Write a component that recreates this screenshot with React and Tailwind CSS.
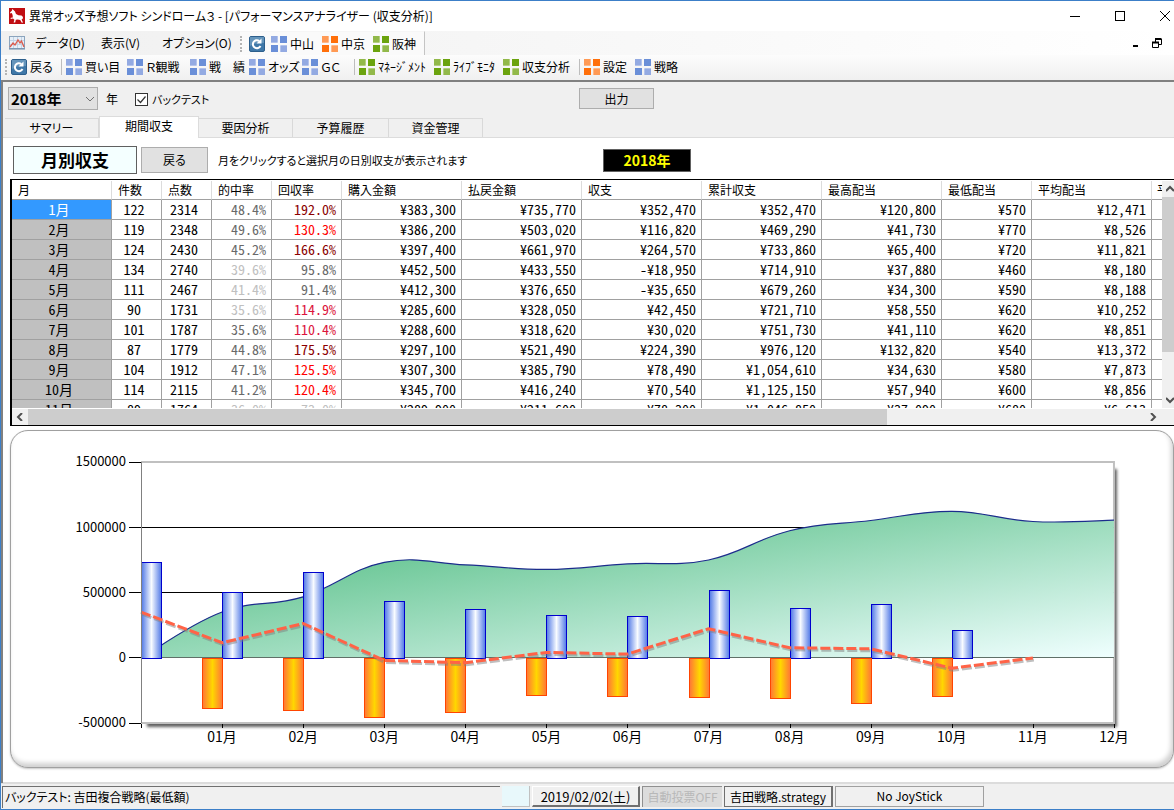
import { useState } from 'react';

const MONTHS = [
  ['1月', '122', '2314', '48.4%', '192.0%', '¥383,300', '¥735,770', '¥352,470', '¥352,470', '¥120,800', '¥570', '¥12,471'],
  ['2月', '119', '2348', '49.6%', '130.3%', '¥386,200', '¥503,020', '¥116,820', '¥469,290', '¥41,730', '¥770', '¥8,526'],
  ['3月', '124', '2430', '45.2%', '166.6%', '¥397,400', '¥661,970', '¥264,570', '¥733,860', '¥65,400', '¥720', '¥11,821'],
  ['4月', '134', '2740', '39.6%', '95.8%', '¥452,500', '¥433,550', '-¥18,950', '¥714,910', '¥37,880', '¥460', '¥8,180'],
  ['5月', '111', '2467', '41.4%', '91.4%', '¥412,300', '¥376,650', '-¥35,650', '¥679,260', '¥34,300', '¥590', '¥8,188'],
  ['6月', '90', '1731', '35.6%', '114.9%', '¥285,600', '¥328,050', '¥42,450', '¥721,710', '¥58,550', '¥620', '¥10,252'],
  ['7月', '101', '1787', '35.6%', '110.4%', '¥288,600', '¥318,620', '¥30,020', '¥751,730', '¥41,110', '¥620', '¥8,851'],
  ['8月', '87', '1779', '44.8%', '175.5%', '¥297,100', '¥521,490', '¥224,390', '¥976,120', '¥132,820', '¥540', '¥13,372'],
  ['9月', '104', '1912', '47.1%', '125.5%', '¥307,300', '¥385,790', '¥78,490', '¥1,054,610', '¥34,630', '¥580', '¥7,873'],
  ['10月', '114', '2115', '41.2%', '120.4%', '¥345,700', '¥416,240', '¥70,540', '¥1,125,150', '¥57,940', '¥600', '¥8,856'],
  ['11月', '89', '1764', '36.0%', '73.0%', '¥289,900', '¥211,600', '-¥78,300', '¥1,046,850', '¥37,090', '¥680', '¥6,613'],
];

// text colours of the hit rate and return rate columns
const HIT_COLORS = [
  'text-[#696969]', 'text-[#696969]', 'text-[#696969]', 'text-[#c0c0c0]', 'text-[#c0c0c0]', 'text-[#c0c0c0]',
  'text-[#696969]', 'text-[#696969]', 'text-[#696969]', 'text-[#696969]', 'text-[#c0c0c0]',
];
const RETURN_COLORS = [
  'text-[#8b0000]', 'text-[#ff0000]', 'text-[#8b0000]', 'text-[#696969]', 'text-[#696969]', 'text-[#dc143c]',
  'text-[#dc143c]', 'text-[#8b0000]', 'text-[#ff0000]', 'text-[#ff0000]', 'text-[#c0c0c0]',
];

const COLUMNS = [
  { label: '月', width: 'w-[100px]' },
  { label: '件数', width: 'w-[50px]' },
  { label: '点数', width: 'w-[50px]' },
  { label: '的中率', width: 'w-[60px]' },
  { label: '回収率', width: 'w-[70px]' },
  { label: '購入金額', width: 'w-[120px]' },
  { label: '払戻金額', width: 'w-[120px]' },
  { label: '収支', width: 'w-[120px]' },
  { label: '累計収支', width: 'w-[120px]' },
  { label: '最高配当', width: 'w-[120px]' },
  { label: '最低配当', width: 'w-[90px]' },
  { label: '平均配当', width: 'w-[120px]' },
];

const TABS = [
  { label: 'サマリー', width: 'w-[94px]' },
  { label: '期間収支', width: 'w-[100px]' },
  { label: '要因分析', width: 'w-[94px]' },
  { label: '予算履歴', width: 'w-[96px]' },
  { label: '資金管理', width: 'w-[94px]' },
];

function TileIcon({ color }) {
  const tones = {
    blue: ['#93aae2', '#6a8fd8'],
    orange: ['#ff9a55', '#ff6f0a'],
    green: ['#92b94a', '#6ba30e'],
  };
  const [light, dark] = tones[color];
  return (
    <svg className="size-4 shrink-0" viewBox="0 0 16 16" aria-hidden="true">
      <rect x="0" y="0" width="7" height="7" fill={light} />
      <rect x="9" y="0" width="7" height="7" fill={dark} />
      <rect x="0" y="9" width="7" height="7" fill={dark} />
      <rect x="9" y="9" width="7" height="7" fill={light} />
      <path d="M6.500 0v7M9.500 9v7M0 6.500h7M9 9.500h7" stroke="#ffffff" strokeOpacity="0.3" />
    </svg>
  );
}

function RefreshIcon() {
  return (
    <svg className="size-4 shrink-0" viewBox="0 0 16 16" aria-hidden="true">
      <rect x="0.5" y="0.5" width="15" height="15" rx="1.5" fill="#3f78a8" stroke="#2d5f8c" />
      <path d="M1 1h14v6Q8 6 1 10z" fill="#7fa8c8" fillOpacity="0.6" />
      <path d="M11.5 10a4 4 0 1 1-1.2-5" fill="none" stroke="#fff" strokeWidth="2" />
      <path d="M12.5 2.5v5h-5z" fill="#fff" />
    </svg>
  );
}

function HorseIcon() {
  return (
    <svg className="size-4 shrink-0" viewBox="0 0 16 16" aria-hidden="true">
      <rect width="16" height="16" fill="#c00d12" />
      <path
        d="M3 1l1.5 1L6 3.5 7 6l2.5 1.2 3 .2 1.3 1.4.4 3-.9-1.6-.6 1.6 1.3 2.8-1.2.2-1.6-2.8-2.4-.6-2 .4-.6 2.6-1.6.2.8-2.8-1.4-1.2L1.6 11l.2-1.2 2-.4L3.6 7 2.8 5 1.4 5.6 1 4.6 3 2.6z"
        fill="#fff"
      />
    </svg>
  );
}

function GraphIcon() {
  return (
    <svg className="h-3.5 w-4 shrink-0" viewBox="0 0 16 14" aria-hidden="true">
      <rect x="0.5" y="0.5" width="15" height="12" fill="#e6eff8" stroke="#8ba4bd" />
      <path d="M4.5 1v11M8.5 1v11M12.5 1v11M1 4.5h14M1 8.5h14" stroke="#c3d3e4" />
      <path d="M1 11l3-4 2 2 3-5 2 3 1.5-2L15 11" fill="none" stroke="#dc5a4b" strokeWidth="1.3" />
      <path d="M0 13h16" stroke="#6d8aa6" />
    </svg>
  );
}

function ToolButton({ icon, label, width, color }) {
  return (
    <button type="button" className={`flex h-5 shrink-0 items-center gap-[3px] whitespace-nowrap ${width}`}>
      {icon === 'refresh' ? <RefreshIcon /> : <TileIcon color={color} />}
      <span>{label}</span>
    </button>
  );
}

function Grip() {
  return <span className="h-4 w-0 border-l-2 border-dotted border-[#b4b4b4]" />;
}

function Separator() {
  return <span className="mr-1 h-4 w-px shrink-0 bg-[#bdbdbd]" />;
}

function Chevron({ d }) {
  return (
    <svg className="size-2 shrink-0" viewBox="0 0 8 8" aria-hidden="true">
      <path d={d} fill="none" stroke="#505050" strokeWidth="2" />
    </svg>
  );
}

function TitleBar() {
  return (
    <header className="flex h-[30px] items-center bg-white pl-2">
      <HorseIcon />
      <h1 className="ml-1 text-xs whitespace-pre">異常オッズ予想ソフト シンドローム３ - [パフォーマンスアナライザー (収支分析)]</h1>
      <div className="-mr-[14px] ml-auto flex">
        <button type="button" aria-label="最小化" className="flex w-[45px] justify-center">
          <svg className="size-3" viewBox="0 0 12 12"><path d="M1 6.5h10" stroke="#000" /></svg>
        </button>
        <button type="button" aria-label="最大化" className="flex w-[45px] justify-center">
          <svg className="size-3" viewBox="0 0 12 12"><rect x="1.5" y="1.5" width="9" height="9" fill="none" stroke="#000" /></svg>
        </button>
        <button type="button" aria-label="閉じる" className="flex w-[46px] justify-center">
          <svg className="size-3" viewBox="0 0 12 12"><path d="M1 1l10 10M11 1L1 11" stroke="#000" /></svg>
        </button>
      </div>
    </header>
  );
}

function MenuBar() {
  return (
    <div className="flex h-6 items-center bg-linear-to-r from-[#f0f0f0] to-white pl-2 text-xs">
      <GraphIcon />
      <nav className="ml-[10px] flex w-[205px] whitespace-nowrap">
        <button type="button" className="w-[66px] text-left">データ(D)</button>
        <button type="button" className="w-[61px] text-left">表示(V)</button>
        <button type="button" className="text-left">オプション(O)</button>
      </nav>
      <div className="flex h-6 items-center border-t border-r border-t-[#f6f6f6] border-r-[#c4c4c4] bg-[#fafafa]">
        <Grip />
        <div className="ml-[7px] flex">
          <ToolButton icon="refresh" label="" width="w-[22px]" />
          <ToolButton color="blue" label="中山" width="w-[51px]" />
          <ToolButton color="orange" label="中京" width="w-[51px]" />
          <ToolButton color="green" label="阪神" width="w-[51px]" />
        </div>
      </div>
      <div className="ml-auto flex items-center gap-3 pr-3">
        <button type="button" aria-label="子ウィンドウを最小化">
          <svg className="h-3 w-2" viewBox="0 0 8 12"><path d="M1 9h5" stroke="#000" strokeWidth="2" /></svg>
        </button>
        <button type="button" aria-label="子ウィンドウを元に戻す">
          <svg className="size-[10px]" viewBox="0 0 10 10">
            <path d="M3 1h6.5M0 4.5h7" stroke="#000" strokeWidth="2" />
            <path d="M3.5 1v3M9.500 1v5.500H7M.5 4v5.500h6V4" fill="none" stroke="#000" />
          </svg>
        </button>
      </div>
    </div>
  );
}

function ToolBar() {
  return (
    <div className="flex h-[25px] items-start bg-linear-to-b from-[#fcfcfc] to-[#f0f0f0] pt-[2px] pl-1 text-xs">
      <div className="flex h-5 items-center">
        <Grip />
        <div className="ml-1 flex items-center">
          <ToolButton icon="refresh" label="戻る" width="w-[50px]" />
          <Separator />
          <ToolButton color="blue" label="買い目" width="w-[61px]" />
          <ToolButton color="blue" label="Ｒ観戦" width="w-[63px]" />
          <ToolButton color="blue" label="戦　績" width="w-[59px]" />
          <ToolButton color="blue" label="オッズ" width="w-[53px]" />
          <ToolButton color="blue" label="ＧＣ" width="w-[52px]" />
          <Separator />
          <ToolButton color="green" label="ﾏﾈｰｼﾞﾒﾝﾄ" width="w-[75px]" />
          <ToolButton color="green" label="ﾗｲﾌﾞﾓﾆﾀ" width="w-[69px]" />
          <ToolButton color="green" label="収支分析" width="w-[76px]" />
          <Separator />
          <ToolButton color="orange" label="設定" width="w-[51px]" />
          <ToolButton color="blue" label="戦略" width="w-[51px]" />
        </div>
      </div>
    </div>
  );
}

function FilterRow() {
  const [backtest, setBacktest] = useState(true);

  return (
    <div className="flex h-[34px] items-start pt-[5px] pl-[5px] text-xs">
      <div className="relative h-[23px] w-[90px]">
        <select
          id="year"
          defaultValue="2018年"
          className="size-full appearance-none border border-[#adadad] bg-[#e1e1e1] pl-[2px] text-[15px] leading-none font-bold"
        >
          <option>2018年</option>
          <option>2017年</option>
        </select>
        <svg className="pointer-events-none absolute top-2 right-1 size-2" viewBox="0 0 8 8">
          <path d="M0 2l4 4 4-4" fill="none" stroke="#707070" />
        </svg>
      </div>
      <label htmlFor="year" className="ml-2 w-[29px] leading-[24px]">年</label>
      <span className="relative mt-[6px] size-[13px]">
        <input
          id="backtest"
          type="checkbox"
          checked={backtest}
          onChange={e => setBacktest(e.target.checked)}
          className="block size-[13px] appearance-none border border-[#333] bg-white"
        />
        {backtest && (
          <svg className="pointer-events-none absolute inset-0 size-[13px]" viewBox="0 0 13 13">
            <path d="M2.500 6.500l3 3 5-6" fill="none" stroke="#333" strokeWidth="1.2" />
          </svg>
        )}
      </span>
      <label htmlFor="backtest" className="ml-1 w-[427px] text-[11px] leading-[24px]">バックテスト</label>
      <button type="button" className="mt-px h-[21px] w-[75px] border border-[#adadad] bg-[#e1e1e1] leading-none">出力</button>
    </div>
  );
}

function Tabs() {
  const [active, setActive] = useState(1);

  return (
    <div role="tablist" className="flex h-[22px] items-end border-b border-[#dcdcdc] pl-[2px] text-xs">
      {TABS.map((tab, i) => (
        <button
          key={tab.label}
          type="button"
          role="tab"
          aria-selected={i === active}
          onClick={() => setActive(i)}
          className={`${tab.width} ${
            i === active
              ? '-mb-px h-[22px] border border-b-0 border-[#dcdcdc] bg-white pb-[3px]'
              : 'h-[19px] border border-b-0 border-l-0 border-[#d9d9d9] bg-[#f0f0f0]'
          }`}
        >
          {tab.label}
        </button>
      ))}
    </div>
  );
}

function cellClass(row, col) {
  if (col === 0) {
    return row === 0 ? 'bg-[#3399ff] text-white text-center' : 'bg-[#c0c0c0] text-center';
  }
  if (col < 3) {
    return 'text-center';
  }
  if (col === 3) {
    return `text-right ${HIT_COLORS[row]}`;
  }
  if (col === 4) {
    return `text-right ${RETURN_COLORS[row]}`;
  }
  return 'text-right';
}

function MonthTable() {
  return (
    <div className="mt-[5px] ml-[7px] border-y border-l-2 border-black">
      <div className="flex h-[229px] border-b border-white pt-px">
        <div className="min-w-0 flex-1 overflow-hidden">
          <table className="w-full table-fixed border-separate border-spacing-0 text-sm leading-[19px]">
            <thead>
              <tr className="text-xs leading-[18px]">
                {COLUMNS.map(col => (
                  <th
                    key={col.label}
                    scope="col"
                    className={`h-[19px] border-r border-b border-r-[#dcdcdc] border-b-[#a0a0a0] p-0 pl-[6px] text-left font-normal whitespace-nowrap ${col.width}`}
                  >
                    {col.label}
                  </th>
                ))}
                <th scope="col" className="overflow-hidden border-b border-b-[#a0a0a0] p-0 pl-[5px] text-left font-normal whitespace-nowrap">平均</th>
              </tr>
            </thead>
            <tbody className="[font-feature-settings:'hwid']">
              {MONTHS.map((row, r) => (
                <tr key={row[0]}>
                  {row.map((value, c) => (
                    <td key={c} className={`h-5 border-r border-b border-[#a0a0a0] p-0 pr-[5px] ${cellClass(r, c)}`}>
                      {value}
                    </td>
                  ))}
                  <td className="border-b border-[#a0a0a0] p-0" />
                </tr>
              ))}
            </tbody>
          </table>
        </div>
        <div className="flex w-3 flex-col items-end bg-[#f0f0f0]">
          <div className="flex h-4 items-center">
            <Chevron d="M0 6l4-4 4 4" />
          </div>
          <div className="h-[155px] w-full bg-[#cdcdcd]" />
          <div className="mt-auto flex h-[17px] items-center">
            <Chevron d="M0 2l4 4 4-4" />
          </div>
        </div>
      </div>
      <div className="flex h-4 items-center bg-[#f0f0f0] pr-[17px]">
        <div className="flex w-4 justify-center">
          <Chevron d="M6 0L2 4l4 4" />
        </div>
        <div className="h-full w-3/4 bg-[#cdcdcd]" />
        <div className="ml-auto">
          <Chevron d="M2 0l4 4-4 4" />
        </div>
      </div>
    </div>
  );
}

const toNumber = text => Number(text.replace(/[¥,]/g, ''));
const COST = MONTHS.map(row => toNumber(row[5]));
const PAYOUT = MONTHS.map(row => toNumber(row[6]));
const PROFIT = [...MONTHS.map(row => toNumber(row[7])), 0];
const TOTAL = [0, ...MONTHS.map(row => toNumber(row[8])), 1057000];

const LEFT = 130;
const TOP = 31;
const STEP = 81.08;
const ZERO = 227;

const px = i => LEFT + i * STEP;
const py = value => ZERO - (value / 500000) * 65.2;

// cardinal spline through the points
function spline(points) {
  const k = 0.2;
  const at = i => points[Math.max(0, Math.min(points.length - 1, i))];
  let d = `M${points[0][0]} ${points[0][1]}`;
  for (let i = 0; i < points.length - 1; i++) {
    const [x0, y0] = at(i - 1);
    const [x1, y1] = at(i);
    const [x2, y2] = at(i + 1);
    const [x3, y3] = at(i + 2);
    d += `C${x1 + (x2 - x0) * k} ${y1 + (y2 - y0) * k} ${x2 - (x3 - x1) * k} ${y2 - (y3 - y1) * k} ${x2} ${y2}`;
  }
  return d;
}

function ProfitChart() {
  const curve = spline(TOTAL.map((value, i) => [px(i), py(value)]));
  const right = px(12);
  const line = PROFIT.map((value, i) => `${px(i)},${py(value)}`).join(' ');

  return (
    <div className="mt-1 ml-[7px] overflow-hidden rounded-[18px] border border-[#a0a0a0] bg-white shadow-[inset_-2px_-4px_5px_#d0d0d0,0_1px_2px_#c8c8c8]">
      <svg className="block w-full" viewBox="0 0 1162 336" role="img" aria-label="月別収支グラフ">
        <defs>
          <linearGradient id="total" x1="0" y1="0" x2="1" y2="1">
            <stop offset="0" stopColor="#3cb371" />
            <stop offset="1" stopColor="#f0ffff" />
          </linearGradient>
          <linearGradient id="payout">
            <stop offset="0" stopColor="#5078e6" />
            <stop offset="0.5" stopColor="#f8fbff" />
            <stop offset="1" stopColor="#5078e6" />
          </linearGradient>
          <linearGradient id="cost">
            <stop offset="0" stopColor="#ff7538" />
            <stop offset="0.5" stopColor="#ffd700" />
            <stop offset="1" stopColor="#ff7538" />
          </linearGradient>
          <filter id="blur" x="-5%" y="-5%" width="110%" height="110%">
            <feGaussianBlur stdDeviation="1.5" />
          </filter>
        </defs>

        <rect x={LEFT + 6} y={TOP + 7} width={right - LEFT - 3} height="258" fill="#606060" filter="url(#blur)" />
        <rect x={LEFT} y={TOP} width={right - LEFT} height="261" fill="#fff" />
        <path d={`M${LEFT} ${TOP}H${right}V${TOP + 261}H${LEFT}`} fill="none" stroke="#c0c0c0" strokeWidth="2" />
        <path d={`M${LEFT - 12} 96.500H${right}M${LEFT - 12} 161.500H${right}`} stroke="#000" />

        <path d={`${curve}V${ZERO}H${LEFT}Z`} fill="url(#total)" />
        <path d={curve} fill="none" stroke="#1c2c8c" strokeWidth="1.2" />
        <path d={`M${LEFT} ${ZERO - 0.5}H${right}`} stroke="#607068" />

        {PAYOUT.map((value, i) => {
          const x = Math.round(px(i)) + 0.5;
          const y = Math.round(py(value)) + 0.5;
          return <rect key={i} x={x} y={y} width="20" height={ZERO + 0.5 - y} fill="url(#payout)" stroke="#0000cd" />;
        })}
        {COST.slice(1).map((value, i) => {
          const x = Math.round(px(i + 1)) - 19.5;
          const height = Math.round(py(-value) - ZERO);
          return <rect key={i} x={x} y={ZERO + 0.5} width="20" height={height} fill="url(#cost)" stroke="#ff4500" />;
        })}

        <polyline points={line} transform="translate(1 2)" fill="none" stroke="#808080" strokeOpacity="0.5" strokeWidth="3" strokeDasharray="10 3" />
        <polyline points={line} fill="none" stroke="#ff6347" strokeWidth="3" strokeDasharray="10 3" />

        <path d={`M${LEFT + 0.5} ${TOP}V292`} stroke="#808080" />
        <path d={`M${LEFT - 12} 31.500H${LEFT}M${LEFT - 12} 226.500H${LEFT}M${LEFT - 12} 292.500H${LEFT}`} stroke="#000" />
        {[1500000, 1000000, 500000, 0, -500000].map(value => (
          <text key={value} x={LEFT - 15} y={py(value) + 4} textAnchor="end" fontSize="13">{value}</text>
        ))}
        {Array.from({ length: 13 }, (_, i) => (
          <g key={i}>
            <path d={`M${Math.round(px(i)) + 0.5} 293v4`} stroke="#000" />
            {i > 0 && (
              <text x={px(i)} y="311" textAnchor="middle" fontSize="14">{`${String(i).padStart(2, '0')}月`}</text>
            )}
          </g>
        ))}
      </svg>
    </div>
  );
}

function StatusBar() {
  return (
    <footer className="flex h-[26px] items-center gap-[2px] border-t border-[#dcdcdc] bg-[#f0f0f0] pl-px text-[13px] whitespace-nowrap">
      <div className="h-[22px] w-[498px] border-t border-l border-[#707070] pl-[2px] text-xs leading-[20px]">バックテスト: 吉田複合戦略(最低額)</div>
      <div className="h-[21px] w-7 border-r border-b border-[#c0c0c0] bg-[#e8f8fb]" />
      <button type="button" className="h-[21px] w-[108px] border-t border-r-2 border-b-2 border-l border-t-white border-r-[#707070] border-b-[#707070] border-l-white leading-none">
        2019/02/02(土)
      </button>
      <button type="button" disabled className="h-[21px] w-20 border-t border-l border-[#909090] bg-[#dcdcdc] text-xs leading-none text-[#b8b8b8]">
        自動投票OFF
      </button>
      <button type="button" className="h-[21px] w-[109px] border border-r-2 border-[#707070] text-xs leading-none">
        吉田戦略.strategy
      </button>
      <div className="h-[21px] w-[149px] border border-[#a0a0a0] text-center text-xs leading-[18px]">No JoyStick</div>
    </footer>
  );
}

function App() {
  return (
    <div className="flex min-h-screen flex-col overflow-hidden border-t border-b border-l border-[#3c7fc8] bg-[#f0f0f0] font-['Noto_Sans_CJK_JP',sans-serif] text-black [font-feature-settings:'palt']">
      <TitleBar />
      <MenuBar />
      <ToolBar />
      <main className="flex flex-1 flex-col border-t-2 border-l-2 border-[#808080]">
        <FilterRow />
        <Tabs />
        <div className="flex-1 border-b border-[#dcdcdc] bg-white pt-2">
          <div className="flex items-center pl-[10px] text-xs">
            <h2 className="h-7 w-[124px] border border-[#606060] bg-[#f4ffff] text-center text-[17px] leading-[26px] font-bold">月別収支</h2>
            <button type="button" className="ml-1 h-[26px] w-[67px] border border-[#adadad] bg-[#e1e1e1]">戻る</button>
            <p className="ml-[10px] w-[385px] text-[11px]">月をクリックすると選択月の日別収支が表示されます</p>
            <div className="h-[23px] w-[88px] border border-[#606060] bg-black text-center text-sm leading-[21px] font-bold text-[#ffff00]">2018年</div>
          </div>
          <MonthTable />
          <ProfitChart />
        </div>
      </main>
      <StatusBar />
    </div>
  );
}

export default App;
